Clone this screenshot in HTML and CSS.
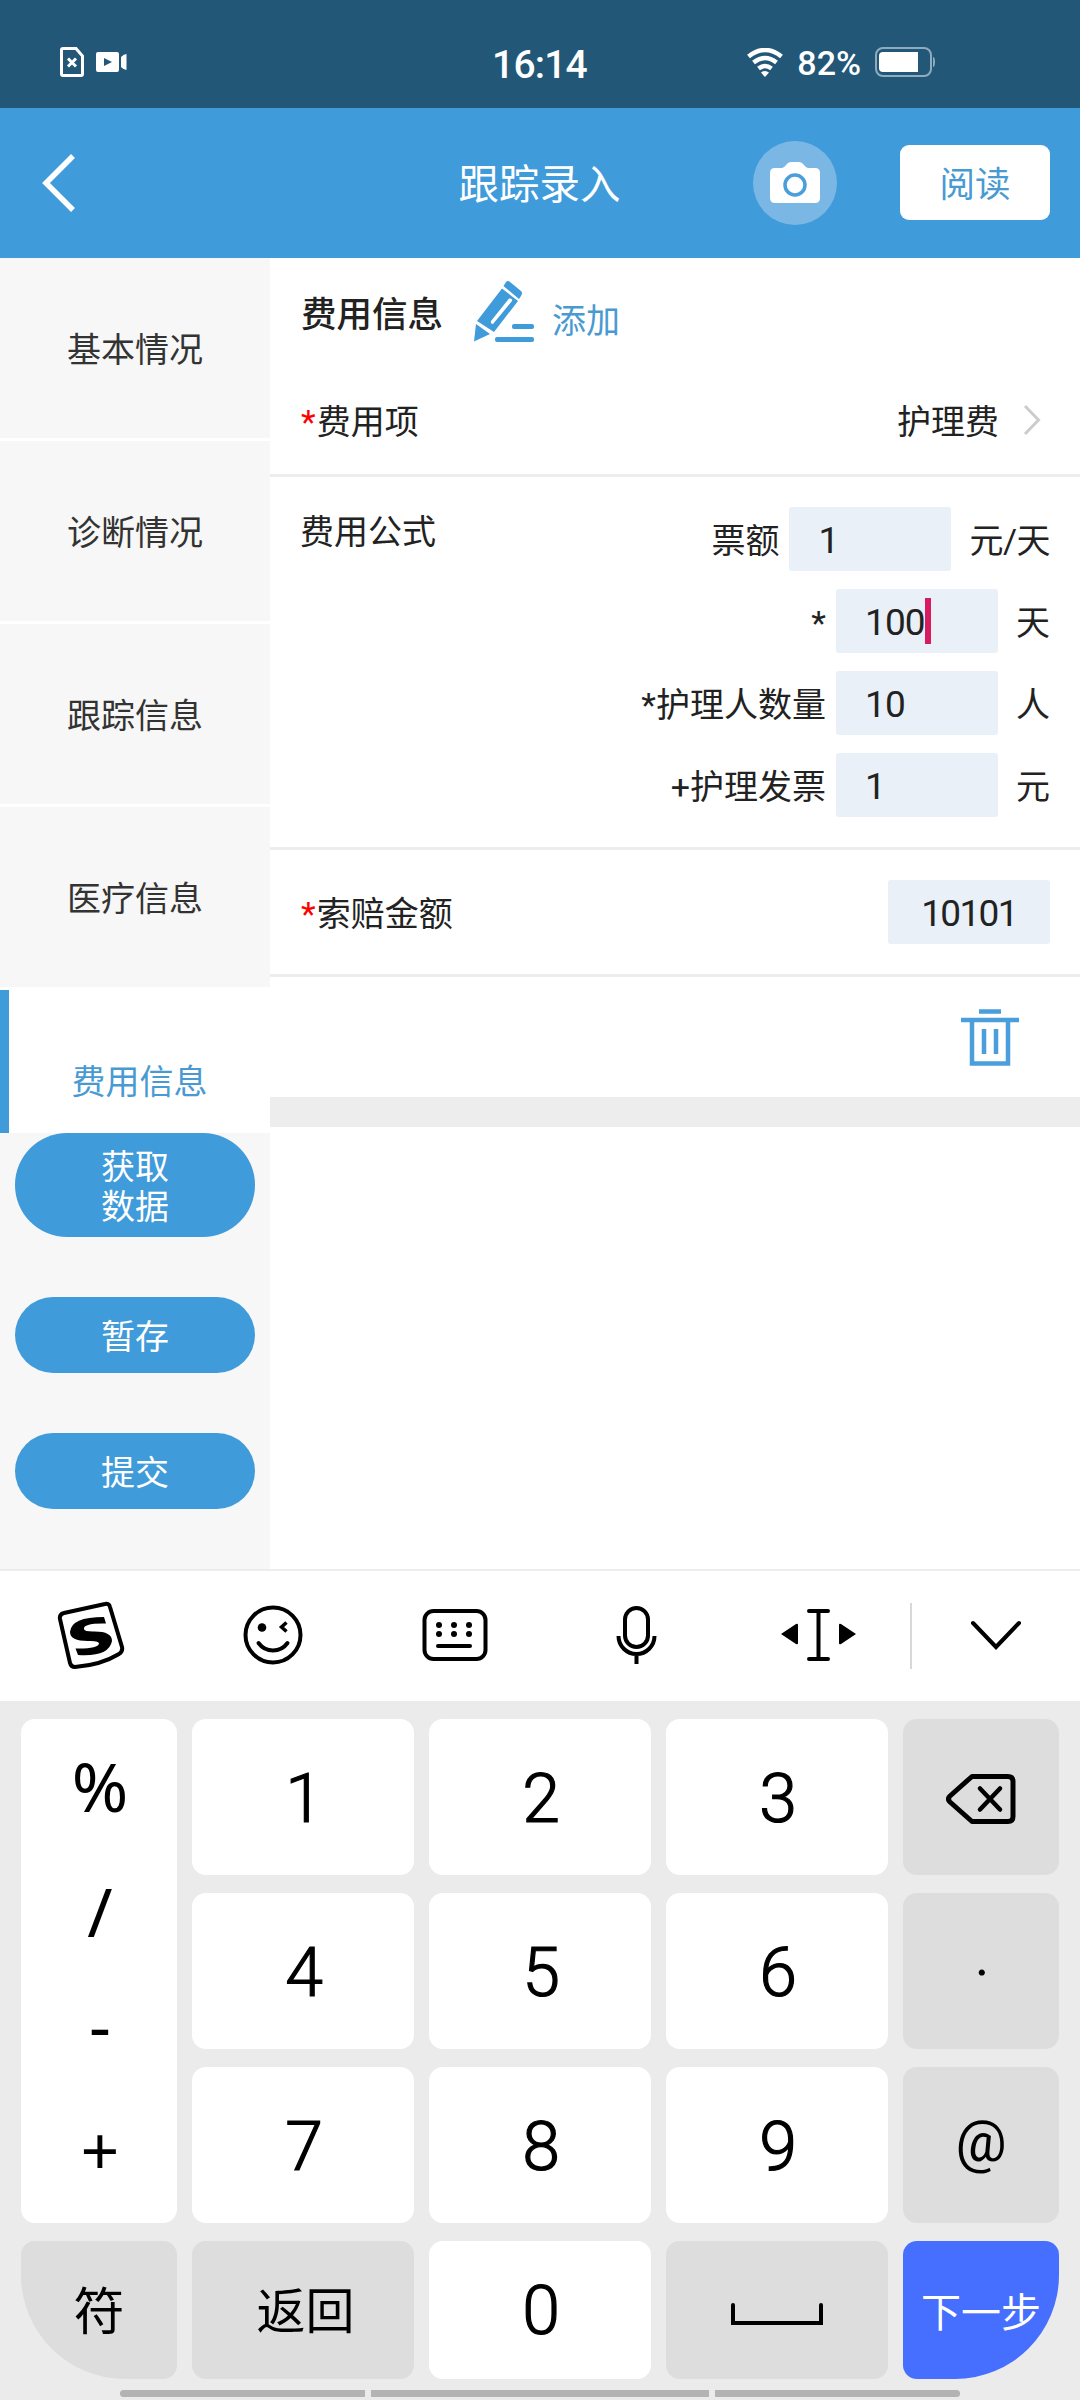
FILE: index.html
```html
<!DOCTYPE html>
<html lang="zh-CN">
<head>
<meta charset="utf-8">
<title>跟踪录入</title>
<link rel="stylesheet" href="styles.css">
</head>
<body>
<div class="screen">
  <header class="status">
    <div class="status-left">
      <svg width="24" height="30" viewBox="0 0 24 30" fill="none" stroke="#fff"><path d="M3 1.5H16L22.5 9V27Q22.5 28.500 21 28.500H3Q1.500 28.500 1.500 27V3Q1.500 1.500 3 1.500Z" stroke-width="3"/><path d="M8 11.500l8 8M16 11.500l-8 8" stroke-width="3"/></svg>
      <svg width="31" height="20" viewBox="0 0 31 20" fill="#fff"><path fill-rule="evenodd" d="M2 0H21Q23 0 23 2V18Q23 20 21 20H2Q0 20 0 18V2Q0 0 2 0ZM8 6V14L16 10Z"/><path d="M30.500 2V18Q28 18 25 15V5Q28 2 30.500 2Z"/></svg>
    </div>
    <span class="clock">16:14</span>
    <div class="status-right">
      <svg width="36" height="29" viewBox="0 0 36 29"><g fill="none" stroke="#fff" stroke-width="4.500"><path d="M1.500 8.500Q18-4.500 34.500 8.500"/><path d="M6.500 14.500Q18 5.500 29.500 14.500"/><path d="M11.500 20.500Q18 15.500 24.500 20.500"/></g><path d="M14 24.500Q18 21.500 22 24.500L18 29Z" fill="#fff"/></svg>
      <span class="percent">82%</span>
      <svg width="60" height="30" viewBox="0 0 60 30"><rect x="1" y="1" width="55" height="28" rx="7" fill="none" stroke="#8fabbf" stroke-width="2"/><path d="M8 5H43V25H8Q4 25 4 21V9Q4 5 8 5Z" fill="#fff"/><path d="M58 10Q60 10 60 15T58 20Z" fill="#8fabbf"/></svg>
    </div>
  </header>

  <nav class="titlebar">
    <svg class="back" width="34" height="58" viewBox="0 0 34 58" fill="none" stroke="#fff" stroke-width="5.500"><path d="M31 2L4 29L31 56"/></svg>
    <h1>跟踪录入</h1>
    <div class="actions">
      <span class="camera"><svg width="52" height="42" viewBox="0 0 52 42"><path d="M6 6H13Q15 6 17 3T22 0H30Q33 0 35 3T39 6H46Q51 6 51 11V36Q51 41 46 41H6Q1 41 1 36V11Q1 6 6 6Z" fill="#fff"/><circle cx="26" cy="23" r="10" fill="none" stroke="#4a9edb" stroke-width="3.500"/></svg></span>
      <button class="read">阅读</button>
    </div>
  </nav>

  <main class="main">
    <aside class="side">
      <div class="tabs">
        <div class="tab">基本情况</div>
        <div class="tab">诊断情况</div>
        <div class="tab">跟踪信息</div>
        <div class="tab">医疗信息</div>
        <div class="tab active">费用信息</div>
      </div>
      <div class="side-actions">
        <button class="pill tall">获取<br>数据</button>
        <button class="pill">暂存</button>
        <button class="pill">提交</button>
      </div>
    </aside>

    <section class="content">
      <div class="section-head">
        <h2>费用信息</h2>
        <svg width="62" height="62" viewBox="0 0 62 62" fill="#3f9bda"><path d="M33 1Q35-1 37 1L48 10Q50 12 48 15L46 18L30.500 5Z"/><path fill-rule="evenodd" d="M29 7.500L45 20L21 51L4 40ZM36 17.500L18 40Q17 43 20 43L39 20Q40 17 36 17.500Z"/><path d="M3 43L17 53L1 60.500Z"/><rect x="39" y="43" width="22" height="5" rx="2"/><rect x="22" y="56" width="39" height="5" rx="2"/></svg>
        <span class="add">添加</span>
      </div>
      <div class="row item-row">
        <span><i class="req">*</i>费用项</span>
        <span class="value">护理费<svg width="18" height="32" viewBox="0 0 18 32" fill="none" stroke="#ccc" stroke-width="3"><path d="M2 2L15.500 16L2 30"/></svg></span>
      </div>
      <div class="row formula">
        <span class="formula-label">费用公式</span>
        <div class="fields">
          <div class="field"><span>票额</span><span class="box">1</span><span class="unit day">元/天</span></div>
          <div class="field"><span>*</span><span class="box">100<b class="caret"></b></span><span class="unit">天</span></div>
          <div class="field"><span>*护理人数量</span><span class="box">10</span><span class="unit">人</span></div>
          <div class="field"><span>+护理发票</span><span class="box">1</span><span class="unit">元</span></div>
        </div>
      </div>
      <div class="row claim">
        <span><i class="req">*</i>索赔金额</span>
        <span class="box total">10101</span>
      </div>
      <div class="remove">
        <svg width="58" height="58" viewBox="0 0 58 58" fill="none" stroke="#4a9edb" stroke-width="4.500"><path d="M18 3.500H40M0 12H58M11 12V55.500H47V12M23 21V46M35 21V46"/></svg>
      </div>
    </section>
  </main>

  <section class="keyboard">
    <div class="tools">
      <div class="tool"><svg width="68" height="68" viewBox="0 0 68 68"><path d="M7 12L48 3Q52 2 53 6L65 46Q66 50 62 53Q44 64 18 66Q14 66 13 62L3 18Q2 13 7 12Z" fill="none" stroke="#000" stroke-width="4"/><path d="M47 16L49 22.500Q26 22 27 28Q27 30.500 36 30.500Q55 30 55 40Q52 56 21 54L18.500 47.500Q41 48 42 42.500Q42 39.500 31 40Q13 40 13 31Q14 16 47 16Z"/></svg></div>
      <div class="tool"><svg width="60" height="60" viewBox="0 0 60 60" fill="none" stroke="#000" stroke-width="4"><circle cx="30" cy="30" r="27.500"/><circle cx="19" cy="22.500" r="4.300" fill="#000" stroke="none"/><path d="M43.500 17.500L38.500 22L43.500 26.500" stroke-width="3.500"/><path d="M15.500 38Q21 45.500 30 45.500T44.500 38" stroke-linecap="round"/></svg></div>
      <div class="tool"><svg class="kb" width="66" height="54" viewBox="0 0 66 54"><rect x="2.500" y="3" width="61" height="48" rx="9" fill="none" stroke="#000" stroke-width="4"/><g><circle cx="17" cy="17" r="3"/><circle cx="32" cy="17" r="3"/><circle cx="47" cy="17" r="3"/><circle cx="17" cy="26" r="3"/><circle cx="32" cy="26" r="3"/><circle cx="47" cy="26" r="3"/></g><path d="M16 38H48" stroke="#000" stroke-width="4" stroke-linecap="round"/></svg></div>
      <div class="tool"><svg width="42" height="58" viewBox="0 0 42 58" fill="none" stroke="#000" stroke-width="4"><rect x="9" y="2" width="23" height="39" rx="11.500"/><path d="M2.500 30A18 18 0 0 0 38.500 30M20.500 48V58"/></svg></div>
      <div class="tool"><svg width="76" height="54" viewBox="0 0 76 54"><path d="M0 26L15 16Q17 15 17 17V35Q17 37 15 36ZM75 26L60 16Q58 15 58 17V35Q58 37 60 36Z"/><path d="M28 3H47M28 51H47M37.500 3V51" stroke="#000" stroke-width="4" stroke-linecap="round"/></svg></div>
      <div class="tool last"><svg width="52" height="30" viewBox="0 0 52 30" fill="none" stroke="#000" stroke-width="4" stroke-linecap="round"><path d="M3 3L26 27L49 3"/></svg></div>
    </div>
    <div class="keys">
      <div class="key symbols"><span>%</span><span>/</span><span class="minus">-</span><span>+</span></div>
      <div class="key">1</div><div class="key">2</div><div class="key">3</div>
      <div class="key alt back-key"><svg width="70" height="52" viewBox="0 0 70 52" fill="none" stroke="#000" stroke-width="5" stroke-linejoin="round" stroke-linecap="round"><path d="M26 3.500H62Q67 3.500 67 8.500V43.500Q67 48.500 62 48.500H26L4 29Q1 26 4 23Z"/><path d="M34 15.500L54 36.500M54 15.500L34 36.500" stroke-width="4.500"/></svg></div>
      <div class="key">4</div><div class="key">5</div><div class="key">6</div>
      <div class="key alt dot">·</div>
      <div class="key">7</div><div class="key">8</div><div class="key">9</div>
      <div class="key alt at">@</div>
      <div class="key alt fu">符</div>
      <div class="key alt ret">返回</div>
      <div class="key zero">0</div>
      <div class="key alt space-key"><svg class="space" width="92" height="22" viewBox="0 0 92 22" fill="none" stroke="#000" stroke-width="4" stroke-linecap="round"><path d="M2 2V20H90V2"/></svg></div>
      <div class="key next">下一步</div>
    </div>
    <div class="navhint"><i></i><i></i><i></i></div>
  </section>
</div>
</body>
</html>
```
FILE: styles.css
```css
* { box-sizing: border-box; }
body {
  margin: 0;
  background: #fff;
  color: #222;
  font-family: Roboto, "Noto Sans CJK SC", sans-serif;
}
svg { display: block; flex: none; }
button { border: 0; padding: 0; font: inherit; }
.screen {
  width: 1080px;
  height: 2400px;
  display: flex;
  flex-direction: column;
  overflow: hidden;
  font-size: 34px;
  line-height: 40px;
}

/* status bar */
.status {
  height: 108px;
  padding: 16px 145px 0 60px;
  display: grid;
  grid-template-columns: 1fr auto 1fr;
  align-items: center;
  background: #225778;
  color: #fff;
}
.status-left { display: flex; align-items: center; gap: 12px; }
.clock { font-size: 39px; font-weight: 500; padding: 6px 0 0 84px; letter-spacing: -0.8px; }
.status-right { display: flex; align-items: center; justify-content: flex-end; gap: 14px; }
.percent { font-size: 34px; font-weight: 500; padding-top: 2px; }

/* title bar */
.titlebar {
  height: 150px;
  padding: 0 30px 0 42px;
  display: grid;
  grid-template-columns: 1fr auto 1fr;
  align-items: center;
  background: #3f9bda;
  color: #fff;
}
.titlebar h1 { margin: 0 13px 0 0; padding: 4px 0 0 0; font-size: 40.5px; font-weight: 400; }
.actions { display: flex; align-items: center; justify-content: flex-end; gap: 63px; }
.camera {
  width: 84px;
  height: 84px;
  border-radius: 50%;
  background: #7ab7e5;
  display: flex;
  align-items: center;
  justify-content: center;
}
.read {
  width: 150px;
  height: 75px;
  margin-top: -1px;
  padding-top: 4px;
  border-radius: 9px;
  background: #fff;
  color: #4a9ad2;
  font-size: 35.5px;
}

/* body */
.main { height: 1311px; display: flex; }
.side { width: 270px; background: #f7f7f7; }
.tabs { height: 875px; overflow: hidden; background: #fff; color: #333; }
.tab {
  height: 180px;
  margin-bottom: 3px;
  padding-top: 3px;
  display: flex;
  align-items: center;
  justify-content: center;
  background: #f7f7f7;
}
.tab.active { background: #fff; color: #4a9ad2; border-left: 9px solid #3f9bda; }
.side-actions { display: flex; flex-direction: column; align-items: center; gap: 60px; }
.pill {
  width: 240px;
  height: 76px;
  padding-top: 3px;
  border-radius: 52px;
  background: #3f9bda;
  color: #fff;
  line-height: 40px;
}
.pill.tall { height: 104px; }

.content { flex: 1; }
.section-head { display: flex; height: 111px; padding: 23px 31px 0; align-items: flex-start; }
.section-head h2 { margin: 14px 30px 0 0; font-size: 35.5px; font-weight: 500; }
.add { margin: 20px 0 0 17px; color: #4a9ad2; }
.row { display: flex; justify-content: space-between; padding: 0 30px; border-bottom: 3px solid #ededed; }
.req { color: #f00; font-style: normal; margin: 0 1px 0 1px; }
.item-row { height: 108px; padding-top: 33px; }
.value { display: flex; gap: 24px; padding-right: 9px; }
.value svg { margin-top: 2px; }
.formula { height: 373px; padding-top: 30px; }
.formula-label { padding-top: 5px; }
.fields { display: flex; flex-direction: column; gap: 18px; }
.field { display: flex; align-items: center; justify-content: flex-end; }
.field > span:not(.box) { padding-top: 3px; }
.box {
  width: 162px;
  height: 64px;
  margin-left: 10px;
  padding: 4px 0 0 29px;
  border-radius: 3px;
  display: flex;
  align-items: center;
  background: #e9f0f7;
  font-size: 37px;
  letter-spacing: -0.9px;
}
.unit { margin-left: 18px; }
.day { letter-spacing: -0.5px; }
.caret { width: 6px; height: 46px; margin-top: -4px; background: #d81b60; }
.claim { height: 127px; padding-top: 30px; align-items: flex-start; }
.claim > :first-child { padding-top: 14px; }
.total { padding-left: 0; justify-content: center; letter-spacing: -1.7px; }
.remove {
  height: 150px;
  padding: 31px 61px 0;
  display: flex;
  justify-content: flex-end;
  border-bottom: 30px solid #ededed;
}

/* keyboard */
.keyboard { height: 831px; background: #ebebeb; color: #000; }
.tools {
  height: 132px;
  border-top: 2px solid #ededed;
  background: #fff;
  display: grid;
  grid-template-columns: repeat(5, 182px) 170px;
}
.tool { display: flex; align-items: center; justify-content: center; }
.tool svg { margin-top: -2px; }
.tool.last { align-self: center; height: 66px; border-left: 2px solid #d8d8d8; }
.keys {
  display: grid;
  grid-template-columns: 156px 222px 222px 222px 156px;
  grid-template-rows: 156px 156px 156px 138px;
  gap: 18px 15px;
  padding: 18px 21px 0;
}
.key {
  display: flex;
  align-items: center;
  justify-content: center;
  padding: 4px 0 0 2px;
  border-radius: 14px;
  background: #fff;
  font-size: 68px;
  font-weight: 300;
  line-height: 68px;
  -webkit-text-stroke: 1.2px #000;
}
.symbols {
  grid-row: span 3;
  flex-direction: column;
  justify-content: space-between;
  padding: 33px 0 39px 2px;
  font-family: "Noto Sans", sans-serif;
  font-weight: 400;
  -webkit-text-stroke: 0;
}
.minus { margin-top: -10px; }
.alt { background: #ddd; }
.back-key { padding-left: 0; }
.dot { font-size: 60px; }
.at, .fu, .ret, .next { font-weight: 400; -webkit-text-stroke: 0; }
.at { font-size: 57px; padding: 0 0 6px; }
.fu { font-size: 51px; padding: 6px 0 0; border-bottom-left-radius: 104px; }
.ret { font-size: 49px; padding: 6px 0 0 5px; }
.zero { padding-top: 2px; }
.space-key { padding: 4px 0 0; }
.space { margin-top: 4px; }
.next {
  background: #466fff;
  color: #fff;
  font-size: 40px;
  padding: 8px 0 0;
  border-bottom-right-radius: 104px;
}
.navhint { display: grid; grid-template-columns: 245px 338px 245px; gap: 6px; padding: 11px 120px 0; }
.navhint i { height: 7px; background: #b3b3b3; }
.navhint i:first-child { border-radius: 4px 0 0 4px; }
.navhint i:last-child { border-radius: 0 4px 4px 0; }
```
